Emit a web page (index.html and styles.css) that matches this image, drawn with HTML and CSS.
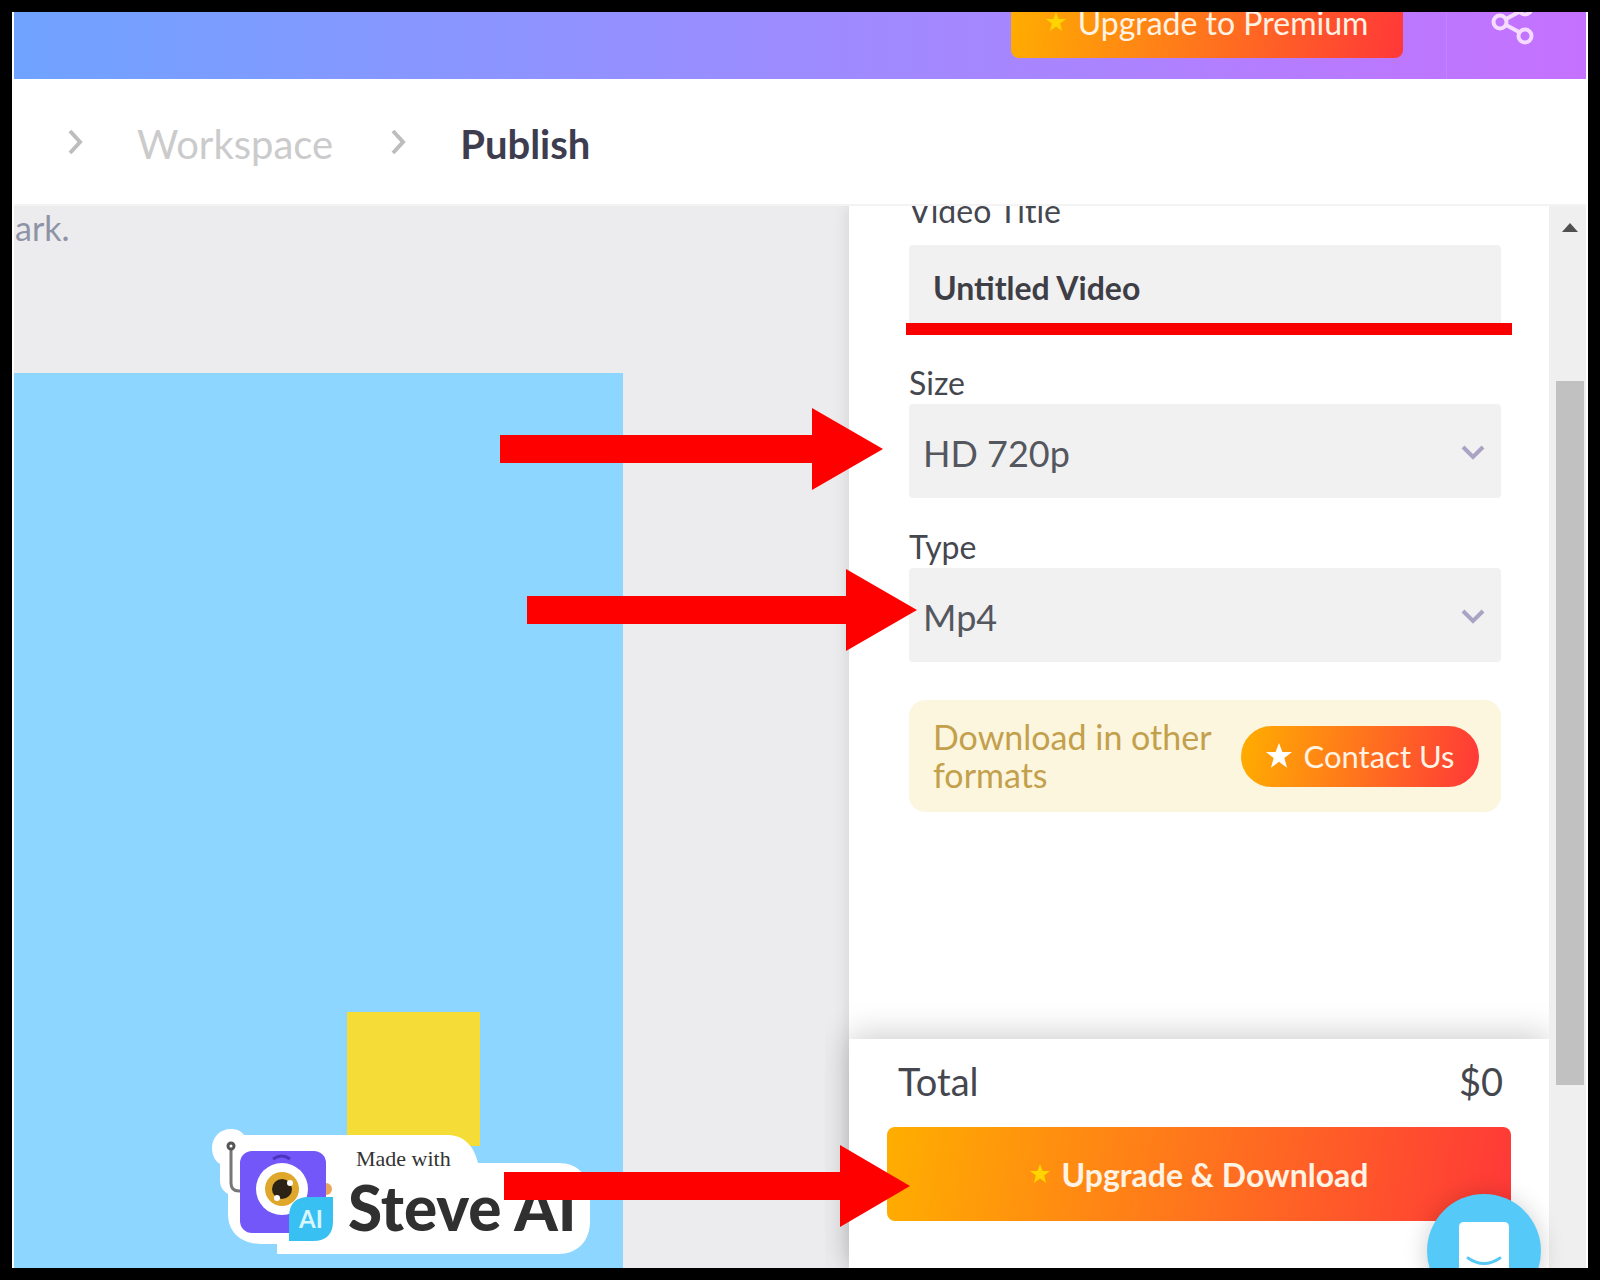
FILE: index.html
```html
<!DOCTYPE html>
<html lang="en">
<head>
<meta charset="utf-8">
<title>Publish - Untitled Video</title>
<link rel="stylesheet" href="styles.css">
</head>
<body>
<div class="app">
  <header class="topbar">
    <button class="btn btn-premium" type="button">
      <svg class="star star-gold" viewBox="0 0 20 20" aria-hidden="true"><path d="M10 0l2.600 7H20l-5.900 4.500L16.200 19 10 14.500 3.800 19l2.100-7.500L0 7h7.400z"/></svg>
      Upgrade to Premium
    </button>
    <button class="share" type="button" aria-label="Share">
      <svg viewBox="0 0 46 46" aria-hidden="true"><path d="M16 20l13-7M16 26l13 7"/><circle cx="10" cy="23" r="6.500"/><circle cx="35" cy="9" r="6.500"/><circle cx="35" cy="37" r="6.500"/></svg>
    </button>
  </header>
  <nav class="crumbs" aria-label="Breadcrumb">
    <svg class="sep" viewBox="0 0 16 26" aria-hidden="true"><path d="M3 2l10 11L3 24"/></svg>
    <a class="crumb" href="#workspace">Workspace</a>
    <svg class="sep" viewBox="0 0 16 26" aria-hidden="true"><path d="M3 2l10 11L3 24"/></svg>
    <a class="crumb crumb-current" href="#publish" aria-current="page">Publish</a>
  </nav>
  <main class="workspace">
    <section class="stage">
      <p class="hint">ark.</p>
      <div class="canvas">
        <div class="block"></div>
        <svg class="badge" viewBox="0 0 390 130" role="img" aria-label="Made with Steve AI">
          <path fill="#fff" d="M19 0c6 0 10 2 13 6h203c16 0 27 10 31 28h80c20 0 32 13 32 32v26c0 20-12 33-32 33H65v-10H50c-20 0-34-11-34-30V65c-5-3-8-7-8-14V35C3 32 0 26 0 19 0 8 8 0 19 0z"/>
          <path fill="none" stroke="#777" stroke-width="3" d="M19 20v34q0 8 8 8h3"/>
          <circle cx="19" cy="17" r="3" fill="#fff" stroke="#555" stroke-width="3"/>
          <circle cx="114" cy="60" r="6" fill="#e9a55c"/>
          <rect x="28" y="22" width="86" height="82" rx="12" fill="#7457f8"/>
          <path fill="none" stroke="#4b35c0" stroke-width="3" d="M61 30q9-6 17 0"/>
          <circle cx="70" cy="60" r="26" fill="#fff"/>
          <circle cx="70" cy="60" r="17" fill="#dfa82c"/>
          <circle cx="70" cy="60" r="10" fill="#2c2216"/>
          <circle cx="78" cy="54" r="3" fill="#fff"/><circle cx="65" cy="69" r="3" fill="#fff"/>
          <path fill="#38c0f2" d="M77 112V88q0-20 20-20h24v24q0 20-20 20z"/>
          <text class="badge-ai" x="87" y="99">AI</text>
          <text class="badge-small" x="144" y="37">Made with</text>
          <text class="badge-name" x="136" y="102">Steve AI</text>
        </svg>
      </div>
    </section>
    <aside class="panel">
      <form class="settings">
        <div class="field field-title">
          <label for="title">Video Title</label>
          <input id="title" type="text" value="Untitled Video">
        </div>
        <div class="field">
          <label for="size">Size</label>
          <div class="select">
            <select id="size"><option>HD 720p</option></select>
            <svg viewBox="0 0 24 16" aria-hidden="true"><path d="M2 3l10 10L22 3"/></svg>
          </div>
        </div>
        <div class="field">
          <label for="type">Type</label>
          <div class="select">
            <select id="type"><option>Mp4</option></select>
            <svg viewBox="0 0 24 16" aria-hidden="true"><path d="M2 3l10 10L22 3"/></svg>
          </div>
        </div>
        <div class="notice">
          <p>Download in other formats</p>
          <button class="btn btn-contact" type="button">
            <svg class="star star-large" viewBox="0 0 20 20" aria-hidden="true"><path d="M10 0l2.600 7H20l-5.900 4.500L16.200 19 10 14.500 3.800 19l2.100-7.500L0 7h7.400z"/></svg>
            Contact Us
          </button>
        </div>
      </form>
      <footer class="checkout">
        <div class="total"><span>Total</span><span>$0</span></div>
        <button class="btn btn-download" type="button">
          <svg class="star star-gold" viewBox="0 0 20 20" aria-hidden="true"><path d="M10 0l2.600 7H20l-5.900 4.500L16.200 19 10 14.500 3.800 19l2.100-7.500L0 7h7.400z"/></svg>
          Upgrade &amp; Download
        </button>
      </footer>
    </aside>
    <div class="scrollbar" aria-hidden="true">
      <svg viewBox="0 0 16 9"><path d="M8 0l8 9H0z"/></svg>
      <div class="thumb"></div>
    </div>
    <div class="underline"></div>
    <svg class="arrow arrow-size" viewBox="0 0 383 82" aria-hidden="true"><path d="M0 27h312V0l71 41-71 41V55H0z"/></svg>
    <svg class="arrow arrow-type" viewBox="0 0 390 82" aria-hidden="true"><path d="M0 27h319V0l71 41-71 41V55H0z"/></svg>
    <svg class="arrow arrow-download" viewBox="0 0 406 82" aria-hidden="true"><path d="M0 27h336V0l70 41-70 41V55H0z"/></svg>
    <button class="chat" type="button" aria-label="Open chat">
      <svg viewBox="0 0 114 114" aria-hidden="true"><path fill="#fff" d="M37 28h40q5 0 5 5v57L68 84H37q-5 0-5-5V33q0-5 5-5z"/><path fill="none" stroke="#58c8f6" stroke-width="3" stroke-linecap="round" d="M41 64q16 11 32 0"/></svg>
    </button>
  </main>
</div>
</body>
</html>
```
FILE: styles.css
```css
* {
  box-sizing: border-box;
}

body {
  margin: 0;
  background: #000;
  font-family: Lato, "Open Sans", sans-serif;
  font-size: 32px;
  color: #45474f;
}

p {
  margin: 0;
}

button,
input,
select {
  font: inherit;
  border: 0;
  margin: 0;
}

.app {
  display: flex;
  flex-direction: column;
  height: 100vh;
  border: 12px solid #000;
  padding: 0 2px;
  background: #fff;
  overflow: hidden;
}

.topbar {
  display: flex;
  flex: none;
  justify-content: flex-end;
  align-items: flex-end;
  height: 67px;
  overflow: hidden;
  background: linear-gradient(90deg, #6fa3ff, #9590ff 40%, #aa84ff 68%, #c571ff);
}

.btn {
  display: flex;
  align-items: center;
  justify-content: center;
  gap: 12px;
  padding: 0;
  color: #fff3e4;
  background: linear-gradient(100deg, #ffae00, #ff7a1a 45%, #ff3838);
}

.star {
  width: 26px;
  height: 26px;
  fill: #fff;
}

.star-gold {
  width: 20px;
  height: 20px;
  fill: #ffd400;
}

.btn-premium {
  flex: none;
  width: 392px;
  height: 72px;
  margin-bottom: 21px;
  border-radius: 8px;
}

.share {
  flex: none;
  width: 140px;
  height: 80px;
  margin-left: 43px;
  padding: 0 0 34px 43px;
  border-left: 1px solid #c084ff;
  background: none;
  text-align: left;
}

.share svg {
  display: block;
  width: 46px;
  height: 46px;
  fill: none;
  stroke: #f5dcff;
  stroke-width: 4;
}

.crumbs {
  display: flex;
  flex: none;
  align-items: center;
  height: 127px;
  padding-left: 53px;
  border-bottom: 2px solid #f3f3f4;
  background: #fff;
  font-size: 40px;
}

.sep {
  width: 16px;
  height: 26px;
  fill: none;
  stroke: #bdbdbf;
  stroke-width: 4;
}

.crumb {
  margin: 4px 57px 0 54px;
  color: #cbcbcc;
  text-decoration: none;
}

.crumb-current {
  margin-right: 0;
  color: #3d3d4f;
  font-weight: 700;
}

.workspace {
  position: relative;
  display: flex;
  flex: 1;
  min-height: 0;
}

.stage {
  display: flex;
  flex: 1;
  flex-direction: column;
  min-width: 0;
  background: #ececee;
}

.hint {
  height: 167px;
  padding-left: 1px;
  font-size: 34px;
  line-height: 44px;
  color: #8e94a5;
}

.canvas {
  position: relative;
  flex: 1;
  margin-right: 226px;
  background: #8cd6ff;
  overflow: hidden;
}

.block {
  position: absolute;
  right: 143px;
  bottom: 122px;
  width: 133px;
  height: 134px;
  background: #f6dc36;
}

.badge {
  position: absolute;
  right: 21px;
  bottom: 3px;
  width: 390px;
  height: 142px;
}

.badge-ai {
  font-size: 24px;
  font-weight: 700;
  fill: #d8f6ff;
}

.badge-small {
  font-family: "Liberation Serif", serif;
  font-size: 22px;
  fill: #333;
}

.badge-name {
  font-size: 62px;
  font-weight: 900;
  fill: #303030;
}

.panel {
  display: flex;
  flex: none;
  flex-direction: column;
  width: 700px;
  background: #fff;
  box-shadow: 0 0 16px rgba(0, 0, 0, 0.12);
  clip-path: inset(0 0 0 -24px);
}

.settings {
  flex: 1;
  min-height: 0;
  padding: 0 48px 0 60px;
  overflow: hidden;
}

.field {
  display: flex;
  flex-direction: column;
  gap: 1px;
  margin-bottom: 28px;
  line-height: 41px;
}

.field-title {
  gap: 14px;
  margin-top: -16px;
}

.field input {
  width: 100%;
  height: 89px;
  padding: 0 24px 4px;
  border-radius: 4px;
  background: #f1f1f1;
  color: #3e3e46;
  font-weight: 700;
}

.select {
  position: relative;
}

.select select {
  display: block;
  width: 100%;
  height: 94px;
  padding: 4px 14px 0;
  border-radius: 4px;
  appearance: none;
  background: #f1f1f1;
  color: #55575f;
  font-size: 36px;
}

.select svg {
  position: absolute;
  top: 40px;
  right: 16px;
  width: 24px;
  height: 16px;
  fill: none;
  stroke: #aaa3c4;
  stroke-width: 4;
}

.notice {
  display: flex;
  align-items: center;
  justify-content: space-between;
  height: 112px;
  margin-top: 38px;
  padding: 0 22px 0 24px;
  border-radius: 16px;
  background: #fdf6df;
  color: #c3a04c;
  font-size: 34px;
  line-height: 38px;
}

.btn-contact {
  flex: none;
  width: 238px;
  height: 61px;
  border-radius: 31px;
  font-size: 31px;
}

.checkout {
  flex: none;
  height: 229px;
  padding: 22px 38px 0;
  background: #fff;
  box-shadow: 0 -4px 32px rgba(0, 0, 0, 0.2);
}

.total {
  display: flex;
  justify-content: space-between;
  margin-bottom: 26px;
  padding: 0 8px 0 11px;
  font-size: 38px;
  line-height: 40px;
}

.btn-download {
  width: 100%;
  height: 94px;
  border-radius: 8px;
  font-weight: 700;
}

.scrollbar {
  display: flex;
  z-index: 1;
  flex: none;
  flex-direction: column;
  align-items: center;
  gap: 149px;
  width: 37px;
  padding: 17px 0 0 5px;
  background: #efefef;
}

.scrollbar svg {
  flex: none;
  width: 16px;
  height: 9px;
  fill: #505050;
}

.thumb {
  flex: none;
  width: 28px;
  height: 704px;
  background: #c1c1c1;
}

.underline {
  position: absolute;
  z-index: 2;
  top: 117px;
  right: 74px;
  width: 606px;
  height: 12px;
  background: #f80000;
}

.arrow {
  position: absolute;
  z-index: 2;
  height: 82px;
  fill: #f00;
}

.arrow-size {
  top: 202px;
  right: 703px;
  width: 383px;
}

.arrow-type {
  top: 363px;
  right: 669px;
  width: 390px;
}

.arrow-download {
  top: 939px;
  right: 676px;
  width: 406px;
}

.chat {
  position: absolute;
  z-index: 2;
  right: 45px;
  bottom: -40px;
  width: 114px;
  height: 114px;
  padding: 0;
  border-radius: 50%;
  background: #55caf8;
  box-shadow: 0 2px 24px rgba(0, 0, 0, 0.2);
}

.chat svg {
  display: block;
}
```
